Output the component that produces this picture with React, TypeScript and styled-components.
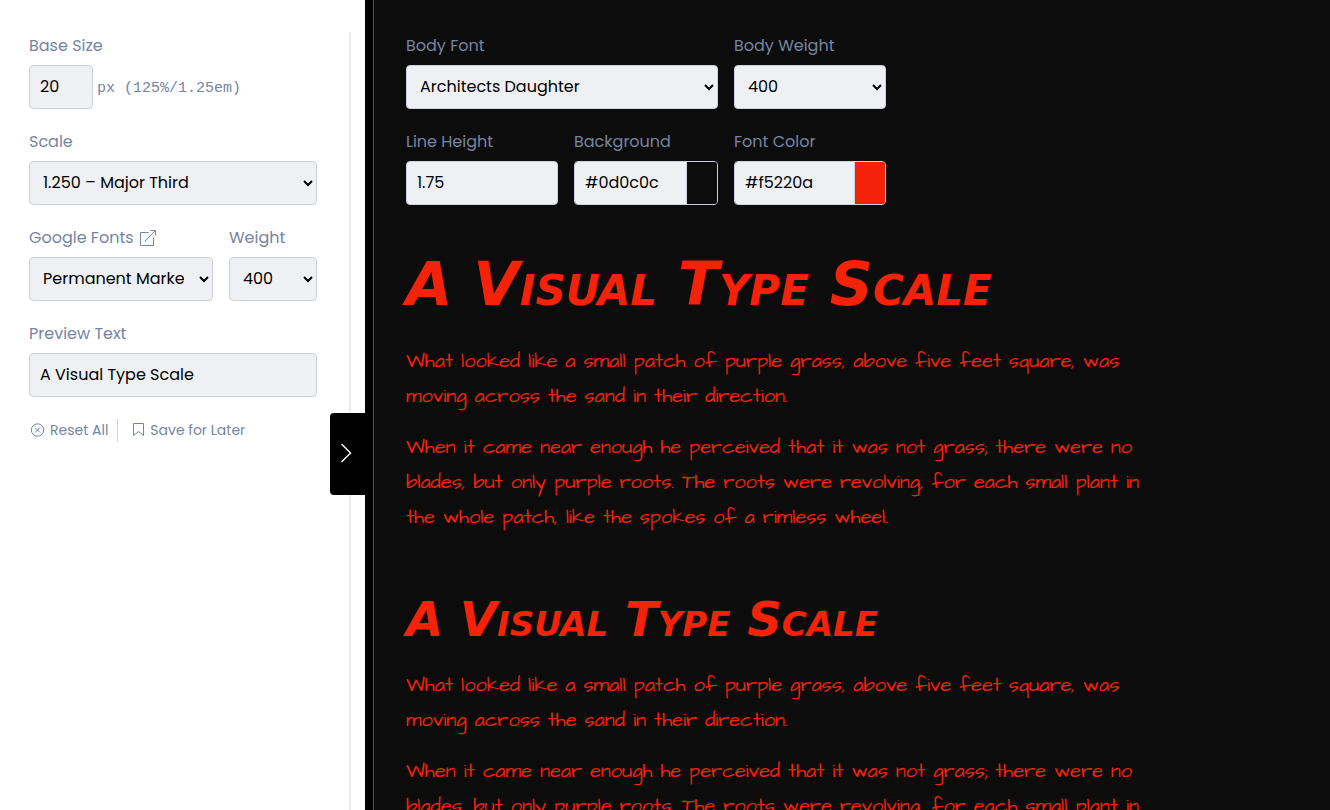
import React, { useState } from "react";
import styled, { createGlobalStyle } from "styled-components";

const ui = `Poppins, Inter, "Open Sans", sans-serif`;

const GlobalStyle = createGlobalStyle`
  *, *::before, *::after { box-sizing: border-box; }
  body { margin: 0; background: #fff; font-family: ${ui}; font-size: 16px; }
  h1, h2, p { margin: 0; }
`;

const Page = styled.div`
  display: flex;
  height: 100vh;
  overflow: hidden;
`;

const Sidebar = styled.aside`
  position: relative;
  flex: 0 0 365px;
  padding: 32px 14px 0 29px;
  display: flex;
  background: #fff;
`;

const Settings = styled.form`
  flex: 1;
  padding-right: 32px;
  border-right: 2px solid #ebebf0;
  display: flex;
  flex-direction: column;
  gap: 19px;
`;

const Field = styled.div<{ $span?: number }>`
  display: flex;
  flex-direction: column;
  gap: 6px;
  min-width: 0;
  grid-column: span ${(p) => p.$span ?? 1};
`;

const LabelRow = styled.div`
  display: flex;
  align-items: center;
  gap: 5px;
  height: 27px;
`;

const Label = styled.label`
  color: #7685a3;
  line-height: 27px;
  white-space: nowrap;
`;

const controlStyle = `
  height: 44px;
  width: 100%;
  min-width: 0;
  border: 1px solid #cdd0da;
  border-radius: 4px;
  background: #eff0f4;
  color: #000;
  font-family: ${ui};
  font-size: 16px;
  padding: 0 10px 2px;
`;

const TextInput = styled.input`
  ${controlStyle}
`;

const SizeInput = styled(TextInput)`
  width: 64px;
`;

const Select = styled.select`
  ${controlStyle}
  padding: 0 12px 2px 9px;
`;

const Inline = styled.div`
  display: flex;
  align-items: center;
  gap: 4px;
`;

const Unit = styled.span`
  font-family: Consolas, "Liberation Mono", monospace;
  font-size: 15px;
  color: #7685a3;
  white-space: nowrap;
  padding-top: 2px;
`;

const FontRow = styled.div`
  display: grid;
  grid-template-columns: 1fr 88px;
  gap: 16px;
`;

const IconLink = styled.a`
  display: flex;
  color: #7685a3;
`;

const Actions = styled.div`
  display: flex;
  align-items: center;
  height: 28px;
`;

const Action = styled.button`
  display: flex;
  align-items: center;
  gap: 4px;
  height: 23px;
  padding: 0 9px 0 0;
  border: 0;
  background: none;
  color: #7685a3;
  font-family: ${ui};
  font-size: 14px;
  white-space: nowrap;

  & + & {
    border-left: 1px solid #ced0d8;
    padding-left: 13px;
  }
`;

const Toggle = styled.button`
  position: absolute;
  right: 0;
  top: 413px;
  width: 35px;
  height: 82px;
  padding: 0 3px 3px 0;
  border: 0;
  border-radius: 4px 0 0 4px;
  background: #000;
  color: #fff;
  display: flex;
  align-items: center;
  justify-content: center;
`;

const Preview = styled.main`
  flex: 1;
  min-width: 0;
  overflow-y: auto;
  scrollbar-width: none;
  padding: 32px;
  border-left: 1px solid #58585a;
  background: #0d0c0c;
  color: #f5220a;
`;

const Frame = styled.div`
  flex: 1;
  min-width: 0;
  display: flex;
  padding-left: 8px;
  background: #000;
`;

const Controls = styled.form`
  display: grid;
  grid-template-columns: 152px 144px 152px;
  gap: 19px 16px;
  margin-bottom: 32px;
`;

const ColorBox = styled.div`
  display: flex;
  height: 44px;
  border: 1px solid #cdd0da;
  border-radius: 4px;
  overflow: hidden;
`;

const ColorText = styled.input`
  flex: 1;
  min-width: 0;
  padding: 0 10px 2px;
  border: 0;
  border-right: 1px solid #cdd0da;
  background: #eff0f4;
  color: #000;
  font-family: ${ui};
  font-size: 16px;
`;

const Swatch = styled.input`
  flex: 0 0 30px;
  width: 30px;
  height: 42px;
  padding: 0;
  border: 0;
  background: none;
  appearance: none;

  &::-webkit-color-swatch-wrapper { padding: 0; }
  &::-webkit-color-swatch { border: 0; border-radius: 0; }
`;

const Heading = styled.h1<{ $size: number; $line: number }>`
  font-family: "Permanent Marker", "DejaVu Sans", sans-serif;
  font-weight: 700;
  font-style: italic;
  font-variant-caps: small-caps;
  font-size: ${(p) => p.$size}px;
  line-height: ${(p) => p.$line}px;
  margin-bottom: 13px;
  white-space: nowrap;
`;

const Sample = styled.section`
  max-width: 740px;
  margin-bottom: 48px;
`;

const Copy = styled.p`
  font-family: "Architects Daughter", Lato, sans-serif;
  font-size: 20px;
  line-height: 35px;
  margin-bottom: 16px;
`;

const ExternalIcon = () => (
  <svg width="18" height="18" viewBox="0 0 18 18" fill="none" stroke="currentColor" aria-hidden="true">
    <path d="M9.5 3.5H1.500V16.500H14.500V8.500M5.500 12.500L16.500 1.500M11.500 1.500H16.500V6.500" />
  </svg>
);

const ResetIcon = () => (
  <svg width="17" height="17" viewBox="0 0 17 17" fill="none" stroke="currentColor" aria-hidden="true">
    <circle cx="8.500" cy="8" r="6.200" />
    <path d="M6 5.500L11 10.500M11 5.500L6 10.500" />
  </svg>
);

const SaveIcon = () => (
  <svg width="15" height="17" viewBox="0 0 15 17" fill="none" stroke="currentColor" aria-hidden="true">
    <path d="M2.500 1.500H12.500V13.500L7.500 9.500L2.500 13.500Z" />
  </svg>
);

const ChevronIcon = () => (
  <svg width="12" height="20" viewBox="0 0 12 20" fill="none" stroke="currentColor" strokeWidth="1.400" aria-hidden="true">
    <path d="M1.500 1L10.500 10L1.500 19" />
  </svg>
);

type PickerProps = { id: string; label: string; value: string; span?: number };

function Picker({ id, label, value, span }: PickerProps) {
  return (
    <Field $span={span}>
      <Label htmlFor={id}>{label}</Label>
      <Select id={id} defaultValue={value}>
        <option>{value}</option>
      </Select>
    </Field>
  );
}

function ColorField({ id, label, initial }: { id: string; label: string; initial: string }) {
  const [color, setColor] = useState(initial);
  return (
    <Field>
      <Label htmlFor={id}>{label}</Label>
      <ColorBox>
        <ColorText id={id} value={color} onChange={(e) => setColor(e.target.value)} />
        <Swatch type="color" aria-label={`${label} swatch`} value={color} onChange={(e) => setColor(e.target.value)} />
      </ColorBox>
    </Field>
  );
}

const Story = () => (
  <>
    <Copy>
      What looked like a small patch of purple grass, above five feet square, was
      moving across the sand in their direction.
    </Copy>
    <Copy>
      When it came near enough he perceived that it was not grass; there were no
      blades, but only purple roots. The roots were revolving, for each small plant in
      the whole patch, like the spokes of a rimless wheel.
    </Copy>
  </>
);

export default function App() {
  const [text, setText] = useState("A Visual Type Scale");
  return (
    <Page>
      <GlobalStyle />
      <Sidebar>
        <Settings>
          <Field>
            <Label htmlFor="base">Base Size</Label>
            <Inline>
              <SizeInput id="base" defaultValue="20" />
              <Unit>px (125%/1.25em)</Unit>
            </Inline>
          </Field>
          <Picker id="scale" label="Scale" value="1.250 – Major Third" />
          <FontRow>
            <Field>
              <LabelRow>
                <Label htmlFor="font">Google Fonts</Label>
                <IconLink href="#fonts" aria-label="Browse Google Fonts">
                  <ExternalIcon />
                </IconLink>
              </LabelRow>
              <Select id="font" defaultValue="Permanent Marker">
                <option>Permanent Marker</option>
              </Select>
            </Field>
            <Picker id="weight" label="Weight" value="400" />
          </FontRow>
          <Field>
            <Label htmlFor="preview">Preview Text</Label>
            <TextInput id="preview" value={text} onChange={(e) => setText(e.target.value)} />
          </Field>
          <Actions>
            <Action type="button">
              <ResetIcon />
              Reset All
            </Action>
            <Action type="button">
              <SaveIcon />
              Save for Later
            </Action>
          </Actions>
        </Settings>
        <Toggle type="button" aria-label="Toggle panel">
          <ChevronIcon />
        </Toggle>
      </Sidebar>
      <Frame>
        <Preview>
          <Controls>
            <Picker id="body-font" label="Body Font" value="Architects Daughter" span={2} />
            <Picker id="body-weight" label="Body Weight" value="400" />
            <Field>
              <Label htmlFor="line-height">Line Height</Label>
              <TextInput id="line-height" defaultValue="1.75" />
            </Field>
            <ColorField id="background" label="Background" initial="#0d0c0c" />
            <ColorField id="font-color" label="Font Color" initial="#f5220a" />
          </Controls>
          <Sample>
            <Heading $size={60} $line={94}>{text}</Heading>
            <Story />
          </Sample>
          <Sample>
            <Heading as="h2" $size={48} $line={72}>{text}</Heading>
            <Story />
          </Sample>
        </Preview>
      </Frame>
    </Page>
  );
}
